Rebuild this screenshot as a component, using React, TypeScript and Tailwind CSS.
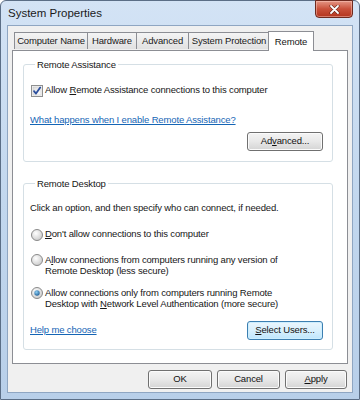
import React from "react";

const U = ({ c }: { c: string }) => <span className="underline underline-offset-[1px]">{c}</span>;

function Btn({ children, w = "w-[76px]", focused = false }: { children: React.ReactNode; w?: string; focused?: boolean }) {
  return (
    <div
      className={`${w} h-[19px] flex items-center justify-center rounded-[3px] border ${
        focused
          ? "border-[#3c7fb1] bg-gradient-to-b from-[#eaf6fd] via-[#d9f0fc] to-[#bee6fd] shadow-[inset_0_0_0_1px_#cdeefe]"
          : "border-[#707070] bg-gradient-to-b from-[#f4f4f4] via-[#e8e8e8] to-[#d4d4d4] shadow-[inset_0_0_0_1px_#fbfbfb]"
      } text-[#111]`}
    >
      {children}
    </div>
  );
}

function Radio({ checked = false }: { checked?: boolean }) {
  return (
    <svg width="12" height="12" viewBox="0 0 12 12" className="shrink-0">
      <defs>
        <radialGradient id={checked ? "rg1" : "rg0"} cx="0.4" cy="0.35" r="0.7">
          <stop offset="0" stopColor="#ffffff" />
          <stop offset="1" stopColor="#c9c9c9" />
        </radialGradient>
        <radialGradient id="dot" cx="0.4" cy="0.35" r="0.7">
          <stop offset="0" stopColor="#8fd0f5" />
          <stop offset="1" stopColor="#1d5d95" />
        </radialGradient>
      </defs>
      <circle cx="6" cy="6" r="5.5" fill={`url(#${checked ? "rg1" : "rg0"})`} stroke="#8b8b8b" strokeWidth="1" />
      {checked && <circle cx="6" cy="6" r="2.7" fill="url(#dot)" />}
    </svg>
  );
}

function Check() {
  return (
    <svg width="12" height="12" viewBox="0 0 12 12" className="shrink-0">
      <defs>
        <linearGradient id="cb" x1="0" y1="0" x2="1" y2="1">
          <stop offset="0" stopColor="#dcdcdc" />
          <stop offset="1" stopColor="#ffffff" />
        </linearGradient>
      </defs>
      <rect x="0.5" y="0.5" width="11" height="11" fill="#f4f4f4" stroke="#8e8f8f" />
      <rect x="2" y="2" width="8" height="8" fill="url(#cb)" stroke="#c2c2c2" strokeWidth="0.5" />
      <path d="M3 6.2 L5 8.6 L9.2 2.6" fill="none" stroke="#2c4f9e" strokeWidth="1.8" strokeLinecap="round" strokeLinejoin="round" />
    </svg>
  );
}

export default function App() {
  const tabs = [
    { t: "Computer Name", w: "w-[74px]" },
    { t: "Hardware", w: "w-[50px]" },
    { t: "Advanced", w: "w-[53px]" },
    { t: "System Protection", w: "w-[82px]" },
  ];
  return (
    <div
      className="w-[360px] h-[400px] flex flex-col rounded-t-[6px] border border-[#5b6e86] bg-gradient-to-b from-[#d3e3f5] via-[#c2d7ee] to-[#b8cfe9] text-[#161616]"
      style={{ fontFamily: '"Liberation Sans", Arial, sans-serif' }}
    >
      {/* title bar */}
      <div className="h-[24px] flex items-start justify-between shrink-0">
        <div className="pl-[7px] pt-[5px] text-[11.5px] leading-[14px] text-[#1a1a1a]">System Properties</div>
        <div className="mr-[6px] -mt-px w-[38px] h-[18px] rounded-b-[4px] border border-[#6e2a1f] bg-gradient-to-b from-[#e49584] via-[#c9503a] to-[#b3341d] shadow-[inset_0_0_0_1px_rgba(255,210,200,0.45)] flex items-center justify-center">
          <svg width="11" height="9" viewBox="0 0 11 9">
            <path d="M2 1 L9 8 M9 1 L2 8" stroke="#5a1c12" strokeWidth="3" strokeLinecap="round" />
            <path d="M2 1 L9 8 M9 1 L2 8" stroke="#ffffff" strokeWidth="1.8" strokeLinecap="round" />
          </svg>
        </div>
      </div>

      {/* client area */}
      <div className="mx-[6px] mb-[6px] flex-1 flex flex-col bg-[#f0f0f0] border border-[#8fa6c2] px-[4px] pt-[5px] text-[9.5px] tracking-[-0.15px]">
        {/* tabs */}
        <div className="flex items-end h-[19px] ml-[2px] relative z-10">
          {tabs.map((tb, i) => (
            <div
              key={tb.t}
              className={`${tb.w} ${i > 0 ? "-ml-px" : ""} h-[17px] mb-px border border-b-0 border-[#8c8e94] bg-gradient-to-b from-[#f4f4f4] to-[#e1e1e1] flex items-center justify-center whitespace-nowrap text-[#1a1a1a]`}
            >
              {tb.t}
            </div>
          ))}
          <div className="w-[46px] -ml-[2px] h-[20px] -mb-px border border-b-0 border-[#8c8e94] bg-white flex items-start pt-[3px] justify-center">
            Remote
          </div>
        </div>

        {/* panel */}
        <div className="h-[314px] bg-white border border-[#8c8e94] pt-[7px] pl-[10px] pr-[14px] flex flex-col gap-[15px]">
          <fieldset className="border border-[#d5dfe5] rounded-[3px] pl-[6px] pr-[9px] pb-[10px]">
            <legend className="ml-[5px] px-[2px] leading-[13px]">Remote Assistance</legend>
            <div className="mt-[13px] ml-px flex items-center gap-[2px] h-[13px]">
              <Check />
              <span>
                Allow <U c="R" />emote Assistance connections to this computer
              </span>
            </div>
            <div className="mt-[16px] h-[13px] leading-[13px] text-[#1565b5] underline">
              What happens when I enable Remote Assistance?
            </div>
            <div className="mt-[6px] flex justify-end">
              <Btn>
                <span>
                  Ad<U c="v" />anced...
                </span>
              </Btn>
            </div>
          </fieldset>

          <fieldset className="border border-[#d5dfe5] rounded-[3px] pl-[6px] pr-[9px] pb-[9px]">
            <legend className="ml-[5px] px-[2px] leading-[13px]">Remote Desktop</legend>
            <div className="mt-[11px] h-[13px] leading-[13px]">Click an option, and then specify who can connect, if needed.</div>
            <div className="mt-[14px] ml-px flex items-center gap-[2px] h-[13px]">
              <Radio />
              <span>
                <U c="D" />on't allow connections to this computer
              </span>
            </div>
            <div className="mt-[13px] ml-px flex items-start gap-[2px] leading-[11px]">
              <Radio />
              <span>
                A<U c="l" />low connections from computers running any version of
                <br />
                Remote Desktop (less secure)
              </span>
            </div>
            <div className="mt-[11px] ml-px flex items-start gap-[2px] leading-[11px]">
              <Radio checked />
              <span>
                Allow connections only from computers running Remote
                <br />
                Desktop with <U c="N" />etwork Level Authentication (more secure)
              </span>
            </div>
            <div className="mt-[12px] flex items-center justify-between">
              <span className="text-[#1565b5] underline">Help me choose</span>
              <Btn focused>
                <span>
                  <U c="S" />elect Users...
                </span>
              </Btn>
            </div>
          </fieldset>
        </div>

        {/* buttons */}
        <div className="mt-[6px] flex justify-end gap-[5px] pr-px">
          <Btn w="w-[64px]">OK</Btn>
          <Btn w="w-[63px]">Cancel</Btn>
          <Btn w="w-[62px]">
            <span>
              <U c="A" />pply
            </span>
          </Btn>
        </div>
      </div>
    </div>
  );
}
